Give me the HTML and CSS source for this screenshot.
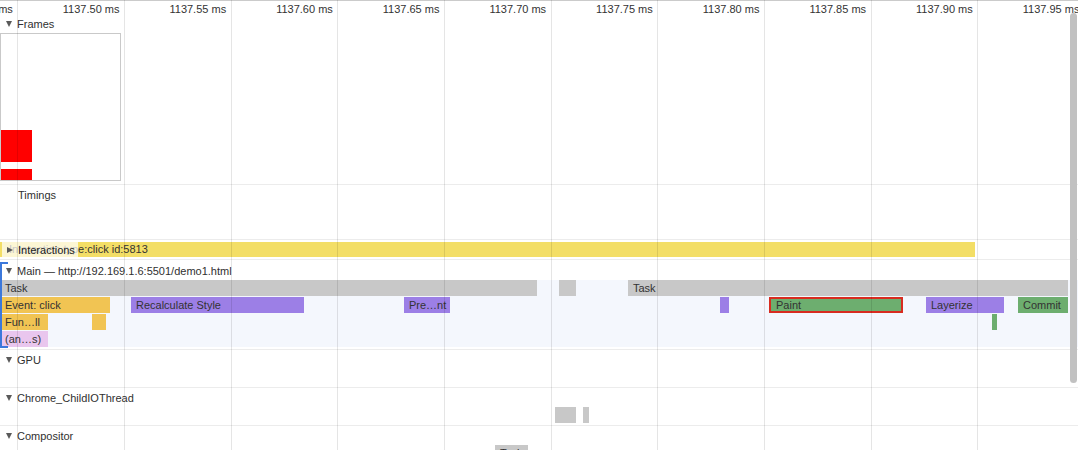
FILE: index.html
```html
<!DOCTYPE html>
<html>
<head>
<meta charset="utf-8">
<link rel="stylesheet" href="styles.css">
</head>
<body>
<div class="panel">
  <div class="ruler">
    <span class="tick first">ms</span>
    <span class="tick">1137.50 ms</span>
    <span class="tick">1137.55 ms</span>
    <span class="tick">1137.60 ms</span>
    <span class="tick">1137.65 ms</span>
    <span class="tick">1137.70 ms</span>
    <span class="tick">1137.75 ms</span>
    <span class="tick">1137.80 ms</span>
    <span class="tick">1137.85 ms</span>
    <span class="tick">1137.90 ms</span>
    <span class="tick">1137.95 ms</span>
  </div>

  <section class="track frames">
    <div class="track-head"><span class="tri down"></span>Frames</div>
    <div class="frame-box">
      <div class="frame-bar tall"></div>
      <div class="frame-bar short"></div>
    </div>
  </section>

  <section class="track timings">
    <div class="track-head plain">Timings</div>
  </section>

  <section class="track interactions">
    <div class="ibar">Interaction type:click id:5813</div>
    <div class="ilabel"><span class="tri right"></span>Interactions</div>
  </section>

  <section class="track main">
    <div class="track-head"><span class="tri down"></span>Main — http://192.169.1.6:5501/demo1.html</div>
    <div class="flame">
      <div class="frow">
        <div class="bar task" style="left:0;width:537px">Task</div>
        <div class="bar task" style="left:559px;width:17px"></div>
        <div class="bar task" style="left:628px;width:440px">Task</div>
      </div>
      <div class="frow">
        <div class="bar script" style="left:0;width:110px">Event: click</div>
        <div class="bar render" style="left:131px;width:173px">Recalculate Style</div>
        <div class="bar render" style="left:404px;width:46px">Pre…nt</div>
        <div class="bar render" style="left:720px;width:9px"></div>
        <div class="bar paint selected" style="left:769px;width:134px">Paint</div>
        <div class="bar render" style="left:926px;width:78px">Layerize</div>
        <div class="bar paint" style="left:1018px;width:50px">Commit</div>
      </div>
      <div class="frow">
        <div class="bar script" style="left:0;width:48px">Fun…ll</div>
        <div class="bar script" style="left:92px;width:14px"></div>
        <div class="bar paint" style="left:992px;width:2px"></div>
      </div>
      <div class="frow">
        <div class="bar other" style="left:0;width:48px">(an…s)</div>
      </div>
    </div>
    <div class="bracket"></div>
  </section>

  <section class="track gpu">
    <div class="track-head"><span class="tri down"></span>GPU</div>
  </section>

  <section class="track io">
    <div class="track-head"><span class="tri down"></span>Chrome_ChildIOThread</div>
    <div class="frow plainrow">
      <div class="bar task" style="left:555px;width:21px"></div>
      <div class="bar task" style="left:583px;width:6px"></div>
    </div>
  </section>

  <section class="track compositor">
    <div class="track-head"><span class="tri down"></span>Compositor</div>
    <div class="frow plainrow">
      <div class="bar task" style="left:495px;width:33px">Task</div>
    </div>
  </section>

  <div class="grid">
    <span class="gcell first"></span>
    <span class="gcell"></span><span class="gcell"></span><span class="gcell"></span>
    <span class="gcell"></span><span class="gcell"></span><span class="gcell"></span>
    <span class="gcell"></span><span class="gcell"></span><span class="gcell"></span>
    <span class="gcell"></span>
  </div>
  <div class="scroll-thumb"></div>
</div>
</body>
</html>
```

FILE: styles.css
```css
html, body {
  margin: 0;
  padding: 0;
  background: #fff;
  overflow: hidden;
}

.panel {
  position: relative;
  width: 1078px;
  height: 450px;
  overflow: hidden;
  font-family: "Liberation Sans", Arial, Helvetica, sans-serif;
  font-size: 11px;
  color: #303030;
}

/* Ruler */
.ruler {
  display: flex;
  height: 15px;
  border-top: 1px solid #cbcbcb;
  white-space: nowrap;
}
.tick {
  flex: 0 0 106.667px;
  box-sizing: border-box;
  text-align: right;
  padding-right: 4.5px;
  line-height: 16px;
  color: #333;
}
.tick.first {
  flex-basis: 17.333px;
  overflow: hidden;
  direction: rtl;
  text-align: left;
}

/* Tracks */
.track {
  position: relative;
  border-bottom: 1px solid #ececec;
  box-sizing: border-box;
}
.track-head {
  display: flex;
  align-items: center;
  height: 20px;
  padding-left: 6px;
  color: #303030;
  white-space: nowrap;
}
.track-head.plain {
  padding-left: 18px;
}
.tri {
  display: inline-block;
  width: 0;
  height: 0;
  margin-right: 5px;
}
.tri.down {
  border-left: 3.5px solid transparent;
  border-right: 3.5px solid transparent;
  border-top: 6px solid #5a5a5a;
}
.tri.right {
  border-top: 3.5px solid transparent;
  border-bottom: 3.5px solid transparent;
  border-left: 6px solid #5a5a5a;
  margin-left: 1px;
  margin-right: 5px;
}

/* Frames */
.frames {
  height: 169px;
}
.frames .track-head {
  height: 16px;
}
.frame-box {
  margin-top: 1px;
  width: 121px;
  height: 148px;
  box-sizing: border-box;
  border: 1px solid #c9c9c9;
  display: flex;
  flex-direction: column;
  justify-content: flex-end;
  gap: 7px;
}
.frame-bar {
  width: 31px;
  background: #ff0000;
}
.frame-bar.tall { height: 32px; }
.frame-bar.short { height: 11px; }

/* Timings */
.timings {
  height: 55px;
}

/* Interactions */
.interactions {
  height: 20px;
  padding-top: 2px;
}
.ibar {
  width: 975px;
  height: 15px;
  line-height: 15px;
  background: #f3de66;
  padding-left: 9px;
  box-sizing: border-box;
  white-space: nowrap;
  color: #333;
}
.ilabel {
  position: absolute;
  left: 2px;
  top: 2px;
  width: 76px;
  height: 15px;
  display: flex;
  align-items: center;
  padding-left: 4px;
  box-sizing: border-box;
  background: rgba(255, 255, 255, 0.72);
  color: #222;
  white-space: nowrap;
}

/* Main */
.main {
  height: 90px;
}
.main .track-head {
  height: 21px;
  padding-top: 1px;
  box-sizing: border-box;
}
.flame {
  background: #f4f7fd;
  height: 67px;
  margin-top: -1px;
}
.frow {
  position: relative;
  height: 17px;
}
.bar {
  position: absolute;
  top: 0;
  height: 16px;
  line-height: 16px;
  padding-left: 5px;
  box-sizing: border-box;
  overflow: hidden;
  white-space: nowrap;
  color: #333;
}
.bar.task { background: #c8c8c8; }
.bar.script { background: #f1c453; }
.bar.render { background: #9c7fe6; }
.bar.paint { background: #6dae6f; }
.bar.other { background: #e9c6ee; }
.bar.selected {
  border: 2px solid #d82c20;
  line-height: 12px;
  padding-left: 5px;
}
.bracket {
  position: absolute;
  left: 0;
  top: 2px;
  width: 8px;
  height: 86px;
  border-left: 2px solid #3b78db;
  border-top: 2px solid #3b78db;
  border-bottom: 2px solid #3b78db;
  box-sizing: border-box;
}

/* GPU / IO / Compositor */
.gpu, .io {
  height: 38px;
}
.io .plainrow {
  margin-top: -1px;
}
.compositor {
  height: 40px;
  border-bottom: none;
}
.compositor .plainrow {
  margin-top: -1px;
}

/* Grid overlay */
.grid {
  position: absolute;
  inset: 0;
  display: flex;
  pointer-events: none;
}
.gcell {
  flex: 0 0 106.667px;
  border-left: 1px solid rgba(0, 0, 0, 0.1);
  box-sizing: border-box;
}
.gcell.first {
  flex-basis: 17.333px;
  border-left: none;
}

/* Scrollbar */
.scroll-thumb {
  position: absolute;
  left: 1070px;
  top: 13px;
  width: 7px;
  height: 370px;
  border-radius: 4px;
  background: #c1c1c1;
}
```
